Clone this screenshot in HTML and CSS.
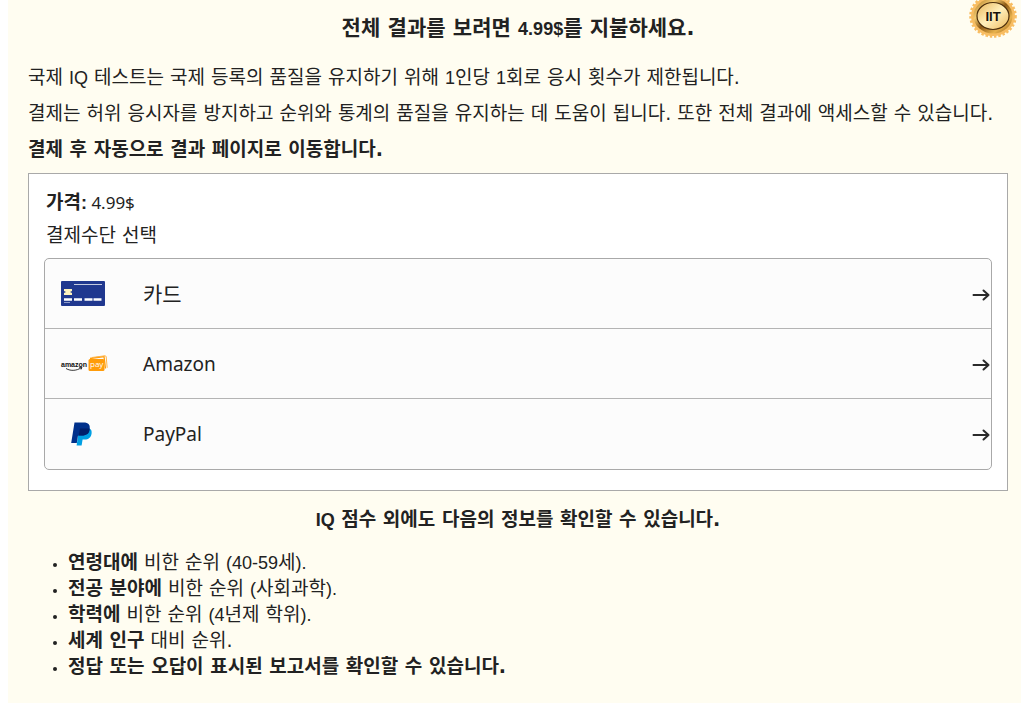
FILE: index.html
```html
<!DOCTYPE html>
<html lang="ko">
<head>
<meta charset="utf-8">
<meta name="viewport" content="width=device-width, initial-scale=1">
<title>IQ 테스트 결제</title>
<link rel="stylesheet" href="styles.css">
</head>
<body>
<main class="page">
  <svg class="seal" viewBox="0 0 50 50" role="img" aria-label="IIT">
    <defs>
      <linearGradient id="gold" x1="0" y1="0" x2="1" y2="1">
        <stop offset="0" stop-color="#a8701c"/><stop offset=".3" stop-color="#f3cc72"/>
        <stop offset=".5" stop-color="#8d5a16"/><stop offset=".75" stop-color="#e8b24d"/><stop offset="1" stop-color="#8a5512"/>
      </linearGradient>
      <linearGradient id="face" x1="0" y1="0" x2="1" y2="1">
        <stop offset="0" stop-color="#e9b65a"/><stop offset=".5" stop-color="#fff0bd"/><stop offset="1" stop-color="#edb95c"/>
      </linearGradient>
    </defs>
    <ellipse cx="25" cy="25" rx="22" ry="20" fill="#f8bd62"/>
    <ellipse cx="25" cy="25" rx="22.5" ry="20.5" fill="none" stroke="#f8bd62" stroke-width="2.6" stroke-dasharray="2.4 1.9"/>
    <ellipse cx="25" cy="25" rx="19.5" ry="17.5" fill="url(#gold)"/>
    <ellipse cx="25" cy="25" rx="16" ry="13.5" fill="url(#face)" stroke="#4b2e0c" stroke-width="1.2"/>
    <text class="seal-text" x="25" y="30" text-anchor="middle">IIT</text>
  </svg>

  <h1 class="title">전체 결과를 보려면 <span class="latin">4.99$</span>를 지불하세요.</h1>
  <p class="text">국제 <span class="latin">IQ</span> 테스트는 국제 등록의 품질을 유지하기 위해 <span class="latin">1</span>인당 <span class="latin">1</span>회로 응시 횟수가 제한됩니다.</p>
  <p class="text">결제는 허위 응시자를 방지하고 순위와 통계의 품질을 유지하는 데 도움이 됩니다. 또한 전체 결과에 액세스할 수 있습니다.</p>
  <p class="text"><strong>결제 후 자동으로 결과 페이지로 이동합니다.</strong></p>

  <section class="checkout">
    <p class="line"><strong>가격<span class="latin">:</span></strong><span class="price"> 4.99$</span></p>
    <p class="line">결제수단 선택</p>
    <div class="methods">
      <button class="method" type="button">
        <svg class="brand" viewBox="0 0 48 30" aria-hidden="true">
          <rect x="2" y="2" width="44" height="25" rx="1" fill="#20388f"/>
          <path d="M15 5.5h28" stroke="#c4cbe0" stroke-width="1"/>
          <path d="M5 10h8v2l-2 1 2 1v2H5v-2l2-1-2-1z" fill="#fff3bd"/>
          <path d="M5 20.5h8M15 20.5h8M25.500 20.5h8M34.500 20.500h8" stroke="#fff" stroke-width="2.400"/>
          <path d="M5 23.500h6" stroke="#8e9bc8" stroke-width="1"/>
        </svg>
        <span class="name name-ko">카드</span>
        <svg class="arrow" viewBox="0 0 18 14" aria-hidden="true"><path d="M1.500 8h15M11.500 3.500l5 4.500-5 4.500"/></svg>
      </button>
      <button class="method" type="button">
        <svg class="brand" viewBox="0 0 48 30" aria-hidden="true">
          <path d="M31 9.500l14-2 1.500 12" fill="none" stroke="#ff9c0a" stroke-width="1.300"/>
          <path d="M33 8.500l13-1.700q1 0 1.200 1l1 11" fill="none" stroke="#ffb54a"/>
          <rect x="29.500" y="10" width="16" height="12" rx="1.500" fill="#ff9c0a"/>
          <text class="amazon-text" x="2" y="18">amazon</text>
          <text class="pay-text" x="31" y="18">pay</text>
          <path d="M7 19.500c5 3 11 2 15-.6M20 18.800l3-.3-1 2" fill="none" stroke="#222" stroke-width=".9"/>
        </svg>
        <span class="name">Amazon</span>
        <svg class="arrow" viewBox="0 0 18 14" aria-hidden="true"><path d="M1.500 8h15M11.500 3.500l5 4.500-5 4.500"/></svg>
      </button>
      <button class="method" type="button">
        <svg class="brand" viewBox="0 0 48 30" aria-hidden="true">
          <path d="M20 9.500h9c3 0 4 2 3.600 5-.7 4-3 6-7 6h-2l-1 6h-5z" fill="#009fe3"/>
          <path d="M15.500 3.500h9c5 0 7 2.600 6 7-.8 4-3.500 6-8 6h-3.500l-1.200 7.500H12.200z" fill="#00308b"/>
          <path d="M21 9.500h9.600c.2 5-3 7-8 7h-3z" fill="#001f6b"/>
        </svg>
        <span class="name">PayPal</span>
        <svg class="arrow" viewBox="0 0 18 14" aria-hidden="true"><path d="M1.500 8h15M11.500 3.500l5 4.500-5 4.500"/></svg>
      </button>
    </div>
  </section>

  <h2 class="subtitle"><span class="latin">IQ</span> 점수 외에도 다음의 정보를 확인할 수 있습니다.</h2>
  <ul class="benefits">
    <li><strong>연령대에</strong> 비한 순위 <span class="latin">(40-59</span>세<span class="latin">).</span></li>
    <li><strong>전공 분야에</strong> 비한 순위 <span class="latin">(</span>사회과학<span class="latin">).</span></li>
    <li><strong>학력에</strong> 비한 순위 <span class="latin">(4</span>년제 학위<span class="latin">).</span></li>
    <li><strong>세계 인구</strong> 대비 순위.</li>
    <li><strong>정답 또는 오답이 표시된 보고서를 확인할 수 있습니다.</strong></li>
  </ul>
</main>
</body>
</html>
```
FILE: styles.css
```css
* {
  box-sizing: border-box;
}

body {
  margin: 0 0 0 8px;
  background: #fff;
  color: #222;
  font-family: "DejaVu Sans", "Noto Sans CJK KR", sans-serif;
  font-size: 19px;
  line-height: 26px;
}

.page {
  position: relative;
  min-height: 100vh;
  padding: 11px 13px 20px 20px;
  background: #fffdf1;
  overflow: hidden;
}

.seal {
  position: absolute;
  top: -9px;
  right: 3px;
  width: 50px;
  height: 50px;
}

.seal-text {
  font: bold 13px "Liberation Sans", sans-serif;
  fill: #17120a;
}

.latin {
  font-family: "Liberation Sans", sans-serif;
  font-size: 18px;
  line-height: 1;
}

.title {
  margin: 0 0 19px;
  font-size: 21px;
  line-height: 34px;
  text-align: center;
}

.text {
  margin: 0 0 10px;
}

.checkout {
  margin-top: 11px;
  padding: 15px 15px 20px;
  border: 1px solid #a9a9a9;
  background: #fff;
}

.line {
  margin: 0 0 7px 2px;
}

.price {
  font-family: "Noto Sans", sans-serif;
  font-size: 17px;
  line-height: 1;
}

.methods {
  margin-top: 10px;
  border: 1px solid #a9a9a9;
  border-radius: 5px;
  background: #fcfcfc;
  overflow: hidden;
}

.method {
  display: flex;
  align-items: center;
  width: 100%;
  height: 70px;
  padding: 0 1px 0 14px;
  border: 0;
  border-bottom: 1px solid #b4b4b4;
  background: transparent;
  color: #222;
  font: 19px/28px "Noto Sans", "Noto Sans CJK KR", sans-serif;
  text-align: left;
  cursor: pointer;
}

.method:last-child {
  border-bottom: 0;
}

.brand {
  width: 48px;
  height: 30px;
  margin-right: 36px;
  overflow: visible;
}

.amazon-text {
  font: bold 7px "Liberation Sans", sans-serif;
  fill: #111;
}

.pay-text {
  font: 8px "Open Sans", sans-serif;
  fill: #fff;
}

.name {
  flex: 1;
}

.name-ko {
  font-size: 21px;
}

.arrow {
  width: 18px;
  height: 14px;
  fill: none;
  stroke: #2a2a2a;
  stroke-width: 2;
  stroke-linecap: round;
  stroke-linejoin: round;
}

.subtitle {
  margin: 15px 0 17px;
  font-size: 19px;
  line-height: 26px;
  text-align: center;
}

.benefits {
  margin: 0;
  padding-left: 40px;
}

.benefits li::marker {
  font-size: 14px;
}
```
